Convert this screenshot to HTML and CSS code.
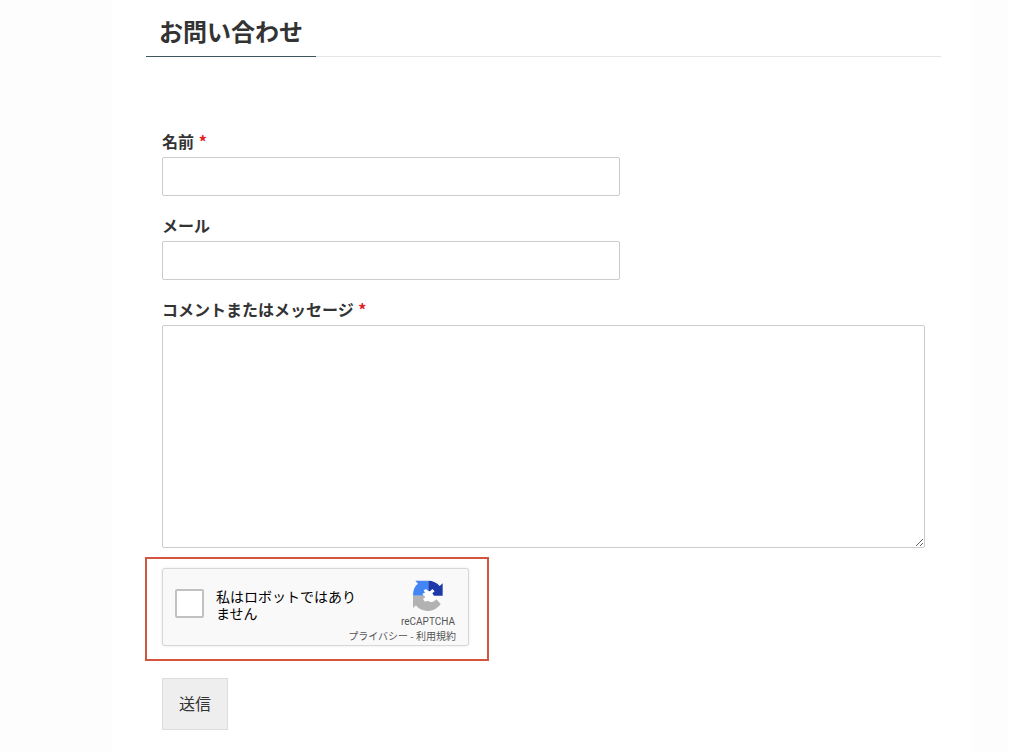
FILE: index.html
```
<!DOCTYPE html>
<html lang="ja">
<head>
  <meta charset="UTF-8">
  <meta name="viewport" content="width=device-width, initial-scale=1.0">
  <title>お問い合わせ</title>
  <link rel="stylesheet" href="styles.css">
</head>
<body>
  <main class="content">
    <h1 class="page-title"><span>お問い合わせ</span></h1>

    <form class="contact-form">
      <div class="field">
        <label for="name">名前 <span class="required">*</span></label>
        <input type="text" id="name" name="name" required>
      </div>
      <div class="field">
        <label for="email">メール</label>
        <input type="email" id="email" name="email">
      </div>
      <div class="field">
        <label for="message">コメントまたはメッセージ <span class="required">*</span></label>
        <textarea id="message" name="message" required></textarea>
      </div>

      <div class="captcha-frame">
        <div class="captcha">
          <input type="checkbox" id="not-robot" name="not-robot">
          <label for="not-robot">私はロボットではありません</label>
          <div class="captcha-brand">
            <svg width="32" height="32" viewBox="0 0 96 96" aria-hidden="true">
              <path fill="#fff" d="M30 24h38v42H30z"/>
              <path fill="#4285f4" d="M10 2H49V33L42 27L35 31L39 38L31 41L35 47H3C3 30 8 18 18 11Z"/>
              <path fill="#1c3aa9" d="M49 2C62 2 75 8 83 18L92 10V47H66L61 40L68 34L61 27L54 34L49 33Z"/>
              <path fill="#b2b2b2" d="M3 47H35L41 50L33 57L39 65L48 62C58 70 68 64 73 58L86 72C76 86 62 93 48 93C32 93 19 86 12 76L3 84Z"/>
            </svg>
            <span>reCAPTCHA</span>
          </div>
          <div class="captcha-terms"><a href="#privacy">プライバシー</a> - <a href="#terms">利用規約</a></div>
        </div>
      </div>

      <button type="submit">送信</button>
    </form>
  </main>
</body>
</html>
```
FILE: styles.css
```
* {
  box-sizing: border-box;
}

html {
  background: #fff;
}

body {
  margin: 0 16px 0 0;
  padding: 0 36px 0 112px;
  background: #fdfdfd;
  color: #333;
  font-family: "Noto Sans CJK JP", sans-serif;
  font-size: 16px;
}

.content {
  min-height: 100vh;
  padding: 7px 31px 20px 34px;
  background: #fff;
}

/* Titre */
.page-title {
  margin: 0 0 75px;
  border-bottom: 1px solid #e3e6e6;
  font-size: 24px;
  line-height: 48px;
}

.page-title span {
  display: inline-block;
  margin-bottom: -1px;
  padding: 0 13px 1px;
  border-bottom: 1px solid #3f5660;
  vertical-align: top;
}

/* Formulaire */
.contact-form {
  padding: 0 16px;
}

.field {
  display: flex;
  flex-direction: column;
  margin-bottom: 20px;
}

.field label {
  margin-bottom: 6px;
  font-weight: bold;
  line-height: 19px;
}

.required {
  margin-left: 1px;
  color: #e02020;
}

.field input,
.field textarea {
  border: 1px solid #ccc;
  border-radius: 2px;
  background: #fff;
  font: inherit;
}

.field input {
  width: 60%;
  height: 39px;
  padding: 6px 10px;
}

.field textarea {
  width: 100%;
  height: 223px;
  padding: 6px 10px;
  resize: vertical;
}

/* reCAPTCHA */
.captcha-frame {
  width: 344px;
  margin: -11px 0 17px -17px;
  padding: 9px 17px 13px 15px;
  border: 2px solid #d4553e;
}

.captcha {
  display: grid;
  grid-template-columns: 29px 1fr 56px;
  grid-template-rows: 60px 16px;
  column-gap: 12px;
  width: 307px;
  padding: 0 12px;
  border: 1px solid #d8d6d8;
  border-radius: 3px;
  background: #faf9fa;
  box-shadow: 0 0 3px rgba(0, 0, 0, 0.1);
  color: #555;
  font-size: 10px;
  line-height: 14px;
}

.captcha input {
  appearance: none;
  width: 29px;
  height: 29px;
  margin: 20px 0 0;
  border: 2px solid #c1c1c1;
  border-radius: 2px;
  background: #fff;
}

.captcha label {
  max-width: 142px;
  padding-top: 19px;
  color: #000;
  font-size: 14px;
  line-height: 17px;
}

.captcha-brand {
  display: flex;
  flex-direction: column;
  align-items: center;
  gap: 3px;
  padding-top: 11px;
  font-family: Roboto, sans-serif;
  font-size: 10px;
}

.captcha-terms {
  grid-column: 1 / -1;
  text-align: right;
}

.captcha-terms a {
  color: inherit;
  text-decoration: none;
}

button {
  display: block;
  height: 52px;
  padding: 0 16px 2px;
  border: 1px solid #ddd;
  background: #eee;
  color: #333;
  font: inherit;
  cursor: pointer;
}
```
